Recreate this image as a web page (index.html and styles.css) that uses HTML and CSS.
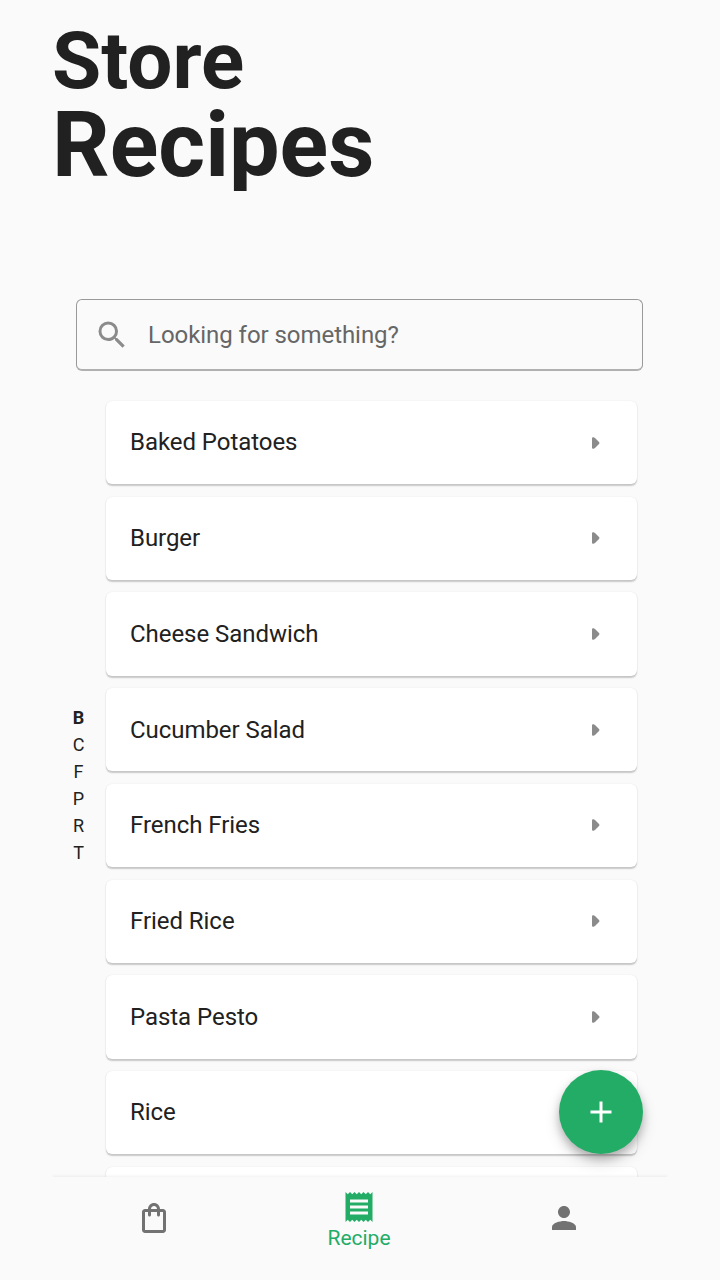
FILE: index.html
```html
<!DOCTYPE html>
<html lang="en">
<head>
<meta charset="utf-8">
<title>Store Recipes</title>
<link rel="stylesheet" href="styles.css">
</head>
<body>
<main class="screen">
  <h1 class="title"><span class="title-small">Store</span><span class="title-large">Recipes</span></h1>
  <div class="search">
    <svg class="icon search-icon" viewBox="0 0 24 24"><path d="M15.5 14h-.79l-.28-.27A6.471 6.471 0 0 0 16 9.5 6.5 6.5 0 1 0 9.5 16c1.61 0 3.09-.59 4.23-1.57l.27.28v.79l5 4.99L20.49 19l-4.99-5zm-6 0C7.01 14 5 11.99 5 9.5S7.01 5 9.5 5 14 7.01 14 9.5 11.99 14 9.5 14z"/></svg>
    <span class="search-hint">Looking for something?</span>
  </div>
  <div class="content">
    <nav class="letters">
      <span class="letter active">B</span><span class="letter">C</span><span class="letter">F</span><span class="letter">P</span><span class="letter">R</span><span class="letter">T</span>
    </nav>
    <div class="list">
      <div class="card"><span>Baked Potatoes</span><svg class="arrow" viewBox="0 0 8 12"><path d="M0 1.2Q0 0 1.6.3L3 1l4 4Q8 6 7 7l-4 4-1.4.7Q0 12 0 10.8z"/></svg></div>
      <div class="card"><span>Burger</span><svg class="arrow" viewBox="0 0 8 12"><path d="M0 1.2Q0 0 1.6.3L3 1l4 4Q8 6 7 7l-4 4-1.4.7Q0 12 0 10.8z"/></svg></div>
      <div class="card"><span>Cheese Sandwich</span><svg class="arrow" viewBox="0 0 8 12"><path d="M0 1.2Q0 0 1.6.3L3 1l4 4Q8 6 7 7l-4 4-1.4.7Q0 12 0 10.8z"/></svg></div>
      <div class="card"><span>Cucumber Salad</span><svg class="arrow" viewBox="0 0 8 12"><path d="M0 1.2Q0 0 1.6.3L3 1l4 4Q8 6 7 7l-4 4-1.4.7Q0 12 0 10.8z"/></svg></div>
      <div class="card"><span>French Fries</span><svg class="arrow" viewBox="0 0 8 12"><path d="M0 1.2Q0 0 1.6.3L3 1l4 4Q8 6 7 7l-4 4-1.4.7Q0 12 0 10.8z"/></svg></div>
      <div class="card"><span>Fried Rice</span><svg class="arrow" viewBox="0 0 8 12"><path d="M0 1.2Q0 0 1.6.3L3 1l4 4Q8 6 7 7l-4 4-1.4.7Q0 12 0 10.8z"/></svg></div>
      <div class="card"><span>Pasta Pesto</span><svg class="arrow" viewBox="0 0 8 12"><path d="M0 1.2Q0 0 1.6.3L3 1l4 4Q8 6 7 7l-4 4-1.4.7Q0 12 0 10.8z"/></svg></div>
      <div class="card"><span>Rice</span></div>
      <div class="card"></div>
    </div>
  </div>
  <footer class="tabs">
    <div class="tab"><svg class="icon" viewBox="0 0 24 24"><path d="M18 6h-2c0-2.21-1.79-4-4-4S8 3.79 8 6H6c-1.1 0-2 .9-2 2v12c0 1.1.9 2 2 2h12c1.1 0 2-.9 2-2V8c0-1.1-.9-2-2-2zm-6-2c1.1 0 2 .9 2 2h-4c0-1.1.9-2 2-2zm6 16H6V8h2v2c0 .55.45 1 1 1s1-.45 1-1V8h4v2c0 .55.45 1 1 1s1-.45 1-1V8h2v12z"/></svg></div>
    <div class="tab selected"><svg class="icon" viewBox="0 0 24 24"><path d="M18 17H6v-2h12v2zm0-4H6v-2h12v2zm0-4H6V7h12v2zM3 22l1.5-1.5L6 22l1.5-1.5L9 22l1.5-1.5L12 22l1.5-1.5L15 22l1.5-1.5L18 22l1.5-1.5L21 22V2l-1.5 1.5L18 2l-1.5 1.5L15 2l-1.5 1.5L12 2l-1.5 1.5L9 2 7.5 3.5 6 2 4.5 3.5 3 2v20z"/></svg><span>Recipe</span></div>
    <div class="tab"><svg class="icon" viewBox="0 0 24 24"><path d="M12 12c2.21 0 4-1.79 4-4s-1.79-4-4-4-4 1.79-4 4 1.79 4 4 4zm0 2c-2.67 0-8 1.34-8 4v2h16v-2c0-2.66-5.33-4-8-4z"/></svg></div>
  </footer>
  <button class="fab" aria-label="Add recipe"><svg class="icon" viewBox="0 0 24 24"><path d="M19 13h-6v6h-2v-6H5v-2h6V5h2v6h6v2z"/></svg></button>
</main>
</body>
</html>
```
FILE: styles.css
```css
* {
  box-sizing: border-box;
}

body {
  margin: 0;
  background: #fafafa;
  color: #212121;
  font-family: Roboto, sans-serif;
}

.screen {
  position: relative;
  display: flex;
  flex-direction: column;
  width: 720px;
  height: 1280px;
  overflow: hidden;
}

.icon {
  display: block;
  width: 36px;
  height: 36px;
  fill: currentColor;
}

.title {
  display: flex;
  flex-direction: column;
  height: 299px;
  margin: 0;
  padding: 21px 0 0 52px;
  font-weight: 700;
}

.title-small {
  font-size: 80px;
  line-height: 80px;
}

.title-large {
  overflow: hidden;
  font-size: 90px;
  line-height: 90px;
}

.search {
  display: flex;
  flex: none;
  align-items: center;
  gap: 18px;
  width: 567px;
  height: 72px;
  margin-left: 76px;
  padding-left: 17px;
  border: 1px solid #999;
  border-bottom: 2px solid #b0b0b0;
  border-radius: 6px;
}

.search-icon {
  color: #8b8b8b;
}

.search-hint {
  color: #666;
  font-size: 24px;
  letter-spacing: -0.05px;
  line-height: 28px;
}

.content {
  display: flex;
  flex: none;
  height: 806px;
  padding: 30px 0 0 52px;
  overflow: hidden;
}

.letters {
  display: flex;
  flex-direction: column;
  width: 54px;
  padding: 303px 1px 0 0;
  font-size: 18px;
  line-height: 27px;
  text-align: center;
}

.active {
  font-weight: 700;
}

.list {
  display: flex;
  flex-direction: column;
  gap: 12.5px;
  width: 531px;
}

.card {
  display: flex;
  flex: none;
  align-items: center;
  justify-content: space-between;
  height: 83.22px;
  padding: 0 37px 0 24px;
  border-radius: 6px;
  background: #fff;
  box-shadow: 0 1.5px 1.5px rgba(0, 0, 0, 0.2), 0 0 1.5px rgba(0, 0, 0, 0.07);
  font-size: 24px;
  letter-spacing: -0.05px;
  line-height: 28px;
}

.card span {
  padding-bottom: 0.5px;
}

.arrow {
  width: 8px;
  height: 12px;
  fill: #8b8b8b;
}

.tabs {
  position: relative;
  display: grid;
  flex: none;
  grid-template-columns: repeat(3, 205px);
  width: 616px;
  height: 103px;
  margin-left: 52px;
  background: #fafafa;
  box-shadow: 0 -1px 3px rgba(0, 0, 0, 0.06);
  clip-path: inset(-6px 0 0 0);
}

.tab {
  display: flex;
  flex-direction: column;
  align-items: center;
  padding: 23px 1px 0 0;
  color: #727272;
}

.selected {
  gap: 1px;
  padding-top: 12px;
  color: #22ac66;
  font-size: 21px;
  line-height: 25px;
}

.fab {
  position: absolute;
  top: 1070px;
  left: 559px;
  display: grid;
  place-items: center;
  width: 84px;
  height: 84px;
  padding: 0;
  border: 0;
  border-radius: 50%;
  background: #22ac66;
  box-shadow: 0 5px 8px rgba(0, 0, 0, 0.22), 0 8px 16px rgba(0, 0, 0, 0.14);
  color: #fff;
}
```
